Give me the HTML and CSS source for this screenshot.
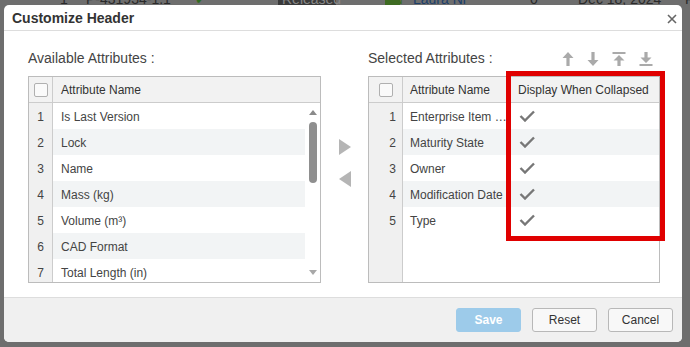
FILE: index.html
```html
<!DOCTYPE html>
<html>
<head>
    <title>Customize Header</title>
    <link rel="stylesheet" href="styles.css">
</head>
<body>
    <div class="page">
        <div class="bg-row">
            <span>1</span>
            <span>P-431934-1.1</span>
            <span class="bg-check">&#10004;</span>
            <span class="bg-state">Released</span>
            <span class="bg-avatar">LN</span>
            <span class="bg-owner">Laura Ni</span>
            <span>0</span>
            <span>Dec 18, 2024</span>
            <span>F</span>
        </div>
    </div>

    <div class="dialog">
        <div class="dialog-header">
            <span class="dialog-title">Customize Header</span>
            <svg class="close" width="10" height="10" viewBox="0 0 10 10"><path d="M1 1 L9 9 M9 1 L1 9" stroke="#666" stroke-width="1.6"/></svg>
        </div>

        <div class="dialog-body">
            <div class="panel panel-left">
                <div class="panel-label">Available Attributes :</div>
                <div class="grid">
                    <div class="grid-head">
                        <div class="head-num"><span class="checkbox"></span></div>
                        <div class="head-cell">Attribute Name</div>
                    </div>
                    <div class="grid-body">
                        <div class="rows">
                            <div class="row"><div class="num">1</div><div class="name">Is Last Version</div></div>
                            <div class="row alt"><div class="num">2</div><div class="name">Lock</div></div>
                            <div class="row"><div class="num">3</div><div class="name">Name</div></div>
                            <div class="row alt"><div class="num">4</div><div class="name">Mass (kg)</div></div>
                            <div class="row"><div class="num">5</div><div class="name">Volume (m³)</div></div>
                            <div class="row alt"><div class="num">6</div><div class="name">CAD Format</div></div>
                            <div class="row"><div class="num">7</div><div class="name">Total Length (in)</div></div>
                        </div>
                        <div class="scrollbar">
                            <span class="sb-up"></span>
                            <span class="sb-thumb"></span>
                            <span class="sb-space"></span>
                            <span class="sb-down"></span>
                        </div>
                    </div>
                </div>
            </div>

            <div class="mover">
                <span class="tri-right"></span>
                <span class="tri-left"></span>
            </div>

            <div class="panel panel-right">
                <div class="panel-label">
                    <span>Selected Attributes :</span>
                    <div class="order-icons">
                        <svg width="12" height="14" viewBox="0 0 12 14"><path d="M6 0 L11.5 6 H7.6 V14 H4.4 V6 H0.5 Z" fill="#aaa"/></svg>
                        <svg width="12" height="14" viewBox="0 0 12 14"><path d="M6 14 L11.5 8 H7.6 V0 H4.4 V8 H0.5 Z" fill="#aaa"/></svg>
                        <svg width="14" height="14" viewBox="0 0 14 14"><rect x="0.5" y="0" width="13" height="2" fill="#aaa"/><path d="M7 3 L12.5 8.5 H8.6 V14 H5.4 V8.5 H1.5 Z" fill="#aaa"/></svg>
                        <svg width="14" height="14" viewBox="0 0 14 14"><path d="M7 11 L12.5 5.5 H8.6 V0 H5.4 V5.5 H1.5 Z" fill="#aaa"/><rect x="0.5" y="12" width="13" height="2" fill="#aaa"/></svg>
                    </div>
                </div>
                <div class="grid grid-selected">
                    <div class="grid-head">
                        <div class="head-num"><span class="checkbox"></span></div>
                        <div class="head-cell head-attr">Attribute Name</div>
                        <div class="head-cell head-disp">Display When Collapsed</div>
                    </div>
                    <div class="grid-body">
                        <div class="rows">
                            <div class="row"><div class="num">1</div><div class="name">Enterprise Item Number</div><div class="disp"><svg width="16" height="12" viewBox="0 0 16 12"><path d="M1.5 6 L6 10.5 L15 1.5" fill="none" stroke="#777" stroke-width="2.4"/></svg></div></div>
                            <div class="row alt"><div class="num">2</div><div class="name">Maturity State</div><div class="disp"><svg width="16" height="12" viewBox="0 0 16 12"><path d="M1.5 6 L6 10.5 L15 1.5" fill="none" stroke="#777" stroke-width="2.4"/></svg></div></div>
                            <div class="row"><div class="num">3</div><div class="name">Owner</div><div class="disp"><svg width="16" height="12" viewBox="0 0 16 12"><path d="M1.5 6 L6 10.5 L15 1.5" fill="none" stroke="#777" stroke-width="2.4"/></svg></div></div>
                            <div class="row alt"><div class="num">4</div><div class="name">Modification Date</div><div class="disp"><svg width="16" height="12" viewBox="0 0 16 12"><path d="M1.5 6 L6 10.5 L15 1.5" fill="none" stroke="#777" stroke-width="2.4"/></svg></div></div>
                            <div class="row"><div class="num">5</div><div class="name">Type</div><div class="disp"><svg width="16" height="12" viewBox="0 0 16 12"><path d="M1.5 6 L6 10.5 L15 1.5" fill="none" stroke="#777" stroke-width="2.4"/></svg></div></div>
                        </div>
                    </div>
                </div>
                <div class="highlight"></div>
            </div>
        </div>

        <div class="dialog-footer">
            <button class="btn btn-save">Save</button>
            <button class="btn">Reset</button>
            <button class="btn">Cancel</button>
        </div>
    </div>
</body>
</html>
```

FILE: styles.css
```css
body { margin: 0; width: 690px; height: 347px; overflow: hidden; position: relative; background: #6e6e6e; font-family: "Liberation Sans", Arial, sans-serif; color: #333; }

.page { height: 100%; }
.bg-row { display: grid; grid-template-columns: 26px 109px 83px 107px 28px 117px 48px 107px auto; padding-left: 60px; margin-top: -9px; height: 16px; line-height: 16px; font-size: 14px; color: #2a2a2a; }
.bg-check { color: #2f6b1f; }
.bg-state { background: #3a3a3a; color: #888; padding: 0 4px; width: 50px; }
.bg-avatar { background: #3e6b22; color: #3e6b22; width: 15px; }
.bg-owner { color: #1c3f6a; }

.dialog { position: absolute; left: 4px; top: 5px; width: 678px; height: 337px; background: #fff; border-radius: 5px; display: flex; flex-direction: column; overflow: hidden; }

.dialog-header { height: 25px; border-bottom: 1px solid #ddd; display: flex; align-items: center; justify-content: space-between; padding: 0 5px 0 8px; }
.dialog-title { font-size: 14px; font-weight: bold; color: #333; }
.close { margin-top: 3px; }

.dialog-body { flex: 1; display: flex; padding: 17px 22px 14px 24px; }
.panel { display: flex; flex-direction: column; }
.panel-left { width: 293px; }
.panel-right { width: 292px; position: relative; }
.panel-label { height: 20px; line-height: 20px; margin-bottom: 8px; font-size: 14px; color: #444; display: flex; justify-content: space-between; align-items: center; }

.order-icons { display: flex; align-items: center; gap: 13px; padding-right: 7px; margin-top: 2px; }

.mover { width: 47px; display: flex; flex-direction: column; align-items: center; padding-top: 91px; gap: 16px; box-sizing: border-box; }
.tri-right { width: 0; height: 0; border-top: 8.5px solid transparent; border-bottom: 8.5px solid transparent; border-left: 12px solid #b5b5b5; }
.tri-left { width: 0; height: 0; border-top: 8.5px solid transparent; border-bottom: 8.5px solid transparent; border-right: 12px solid #b5b5b5; }

.grid { height: 207px; border: 1px solid #bcbcbc; box-sizing: border-box; display: flex; flex-direction: column; overflow: hidden; font-size: 12px; }
.grid-head { height: 25px; flex: none; border-bottom: 1px solid #ccc; background: #f2f2f2; display: flex; }
.head-num { width: 23px; border-right: 1px solid #ccc; display: flex; align-items: center; justify-content: center; }
.head-cell { display: flex; align-items: center; padding-left: 8px; color: #333; }
.checkbox { width: 12px; height: 12px; border: 1px solid #b0b0b0; border-radius: 2px; background: #fafafa; }

.grid-body { flex: 1; display: flex; overflow: hidden; background: linear-gradient(to right, #f0f0f0 23px, #ccc 23px, #ccc 24px, #fff 24px); }
.rows { flex: 1; display: flex; flex-direction: column; }
.row { height: 26px; flex: none; display: flex; align-items: stretch; }
.num { width: 23px; margin-right: 1px; display: flex; align-items: center; justify-content: center; color: #444; padding-top: 1px; box-sizing: border-box; }
.name { flex: 1; display: flex; align-items: center; padding-left: 8px; padding-top: 1px; color: #444; white-space: nowrap; overflow: hidden; }
.row.alt .name, .row.alt .disp { background: #f2f4f5; }

.scrollbar { width: 15px; display: flex; flex-direction: column; align-items: center; padding-top: 7px; box-sizing: border-box; }
.sb-up { width: 0; height: 0; border-left: 4px solid transparent; border-right: 4px solid transparent; border-bottom: 5px solid #8a8a8a; margin-bottom: 7px; }
.sb-thumb { width: 8px; height: 61px; border-radius: 4px; background: #8f8f8f; }
.sb-space { flex: 1; }
.sb-down { width: 0; height: 0; border-left: 4px solid transparent; border-right: 4px solid transparent; border-top: 5px solid #a8a8a8; margin-bottom: 7px; }

.grid-selected .head-num { width: 33px; }
.grid-selected .head-attr { width: 98px; border-right: 1px solid #ccc; padding-left: 7px; }
.grid-selected .head-disp { padding-left: 9px; }
.grid-selected .grid-body { background: linear-gradient(to right, #f0f0f0 33px, #ccc 33px, #ccc 34px, #fff 34px); }
.grid-selected .num { width: 33px; margin-right: 1px; justify-content: flex-end; padding-right: 6px; }
.grid-selected .name { flex: none; width: 98px; padding-left: 7px; display: block; line-height: 26px; text-overflow: ellipsis; }
.disp { flex: 1; display: flex; align-items: center; padding-left: 11px; }

.highlight { position: absolute; left: 138px; top: 23px; width: 159px; height: 170px; box-sizing: border-box; border: 5px solid #e00000; }

.dialog-footer { height: 44px; flex: none; border-top: 1px solid #ddd; background: #f0f0f0; display: flex; justify-content: flex-end; align-items: center; gap: 11px; padding-right: 9px; }
.btn { width: 65px; height: 24px; box-sizing: border-box; border: 1px solid #b8b8b8; border-radius: 3px; background: #f8f8f8; font-family: "Liberation Sans", Arial, sans-serif; font-size: 12px; color: #333; padding: 0; }
.btn-save { background: #9dcbea; border-color: #9dcbea; color: #fff; font-weight: bold; }
```
